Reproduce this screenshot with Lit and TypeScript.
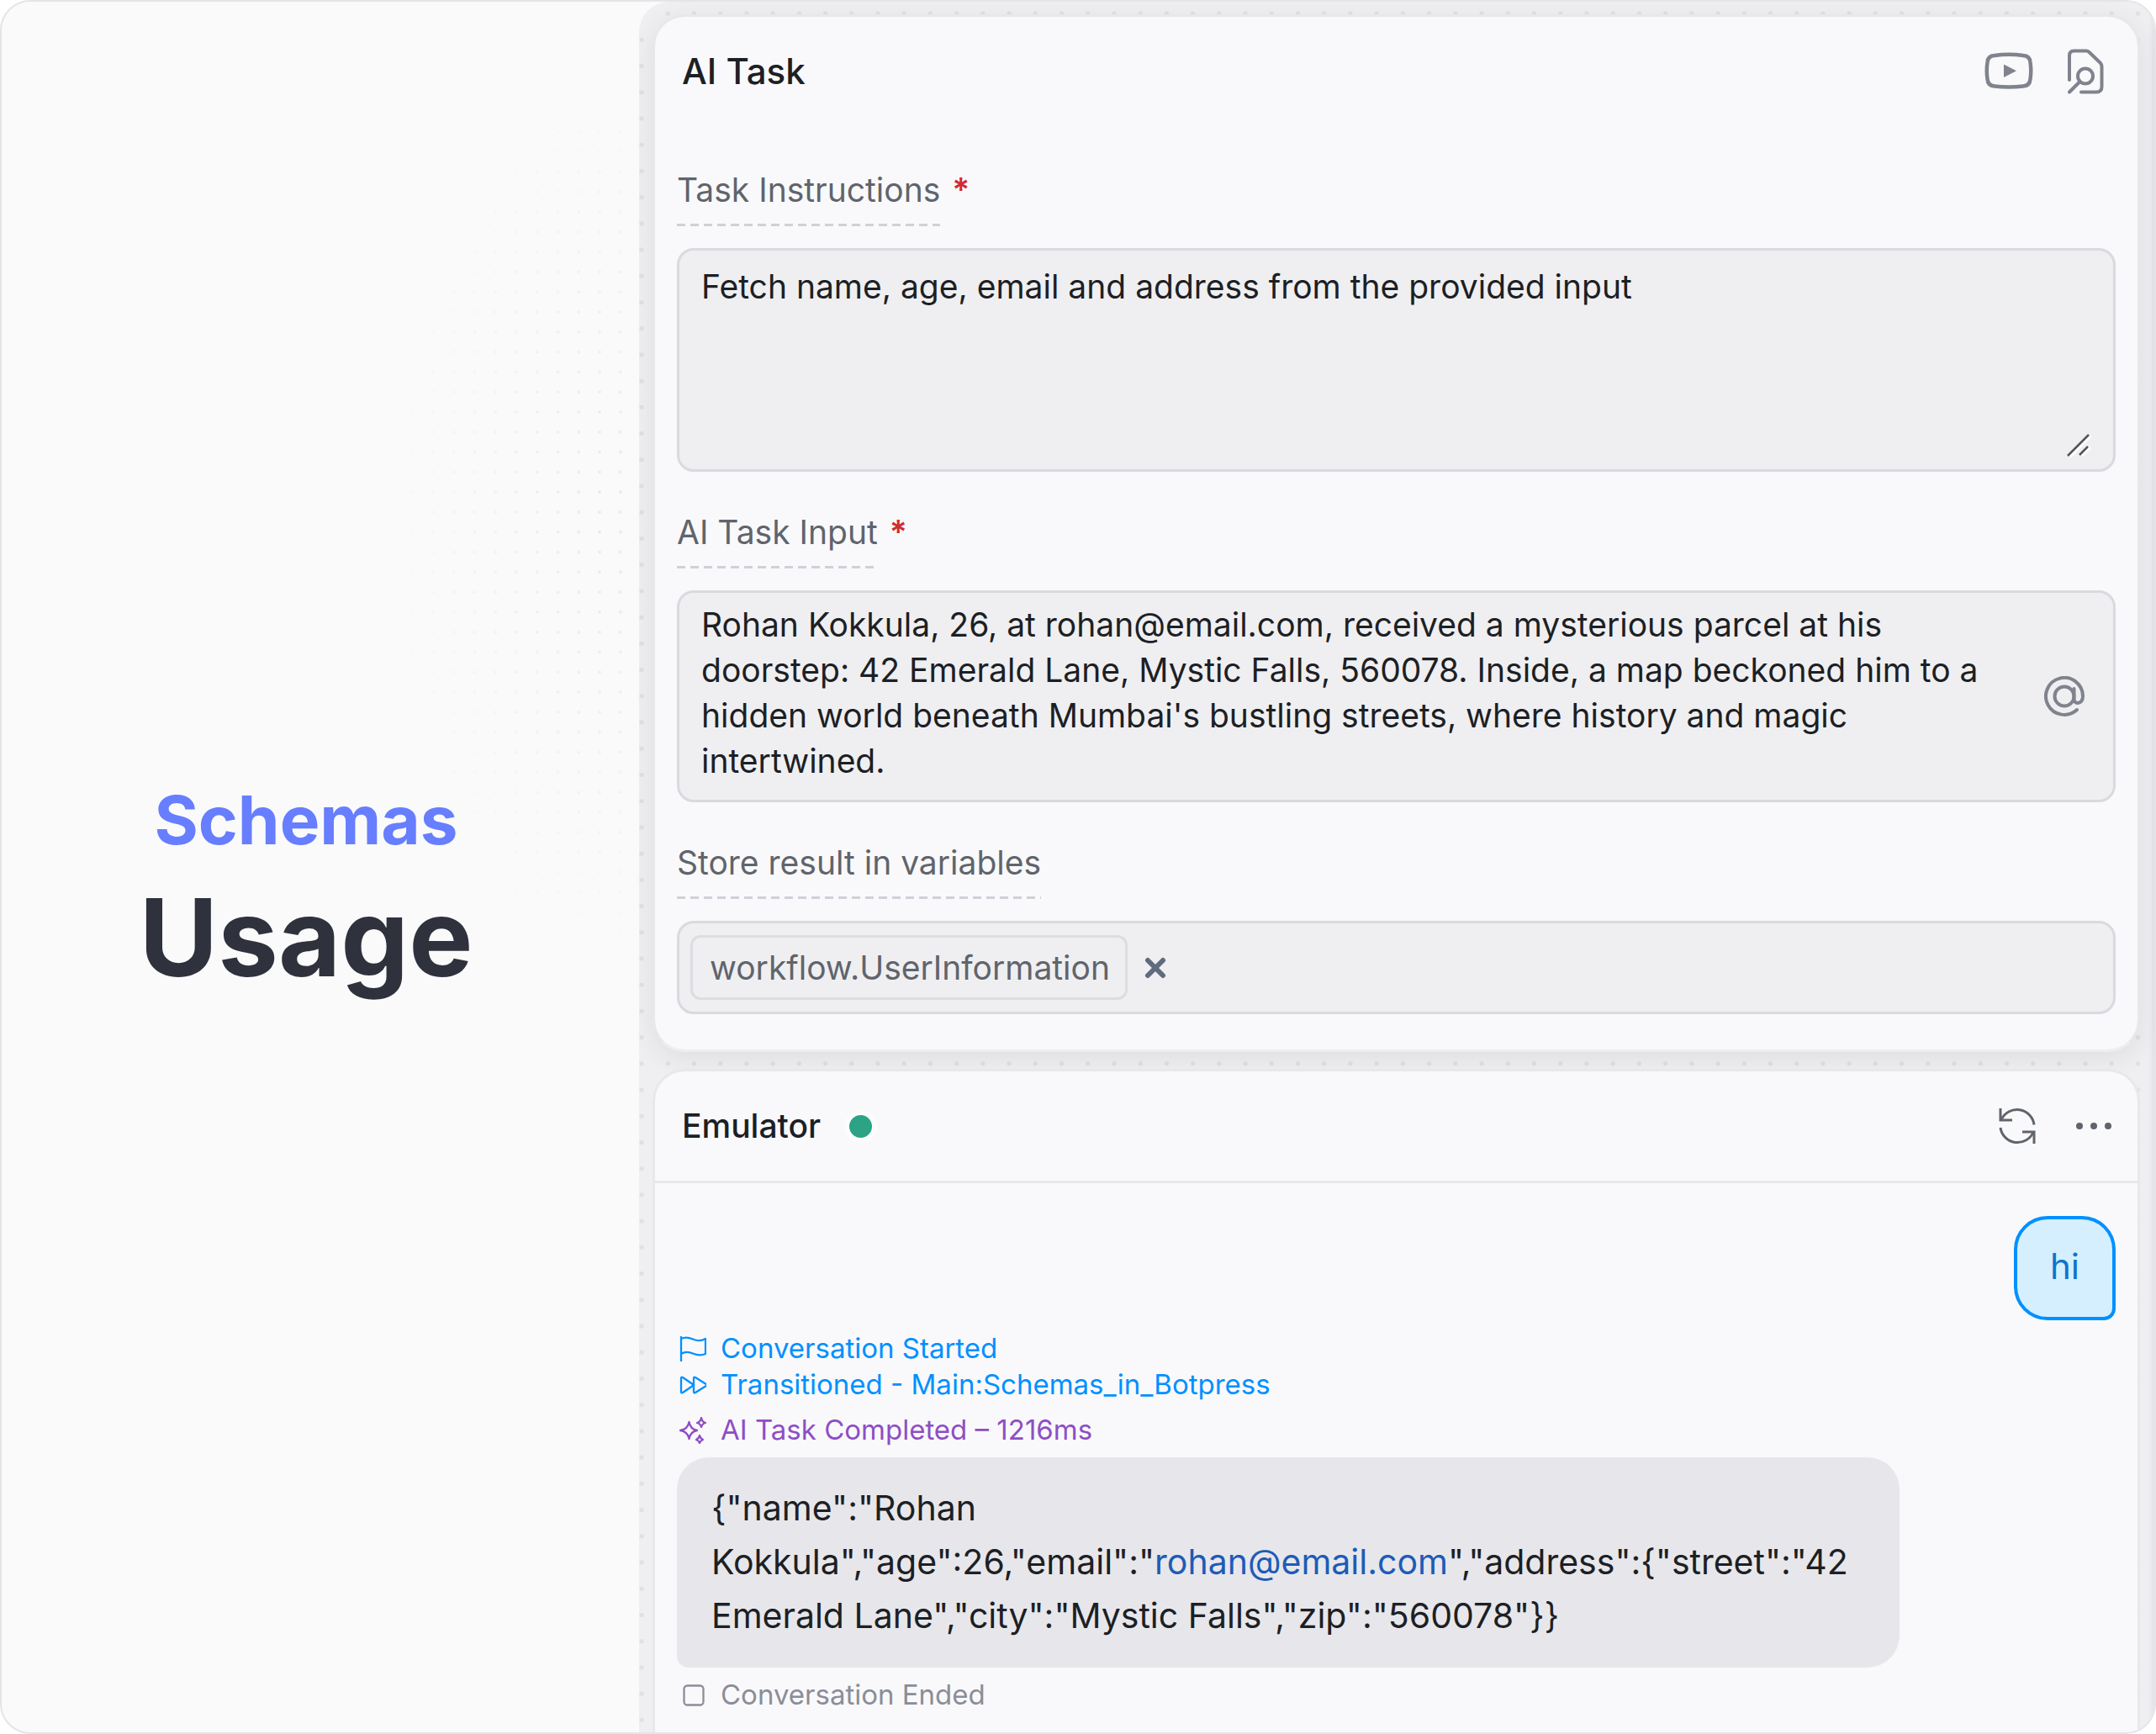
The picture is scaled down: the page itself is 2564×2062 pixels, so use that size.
import { LitElement, html, css, svg } from "lit";
import { customElement } from "lit/decorators.js";

const base = css`
  * { box-sizing: border-box; margin: 0; }
  button {
    display: flex;
    padding: 0;
    border: 0;
    background: none;
    color: inherit;
    cursor: pointer;
  }
  svg { display: block; fill: none; stroke: currentColor; }
`;

const card = css`
  :host { display: block; }
  .card {
    border: 3px solid #e8e8eb;
    border-radius: 38px;
    background: #f9f9fb;
    background-clip: padding-box;
    color: #1c2024;
  }
  .head { display: flex; align-items: center; justify-content: space-between; }
  h2 { font-size: 42px; line-height: 56px; font-weight: 500; }
`;

@customElement("task-card")
class TaskCard extends LitElement {
  static styles = [base, card, css`
    .card { padding: 37px 26px 42px; border-bottom-color: #eeeef0; box-shadow: 0 8px 32px rgba(0, 0, 0, 0.07); }
    .head { padding: 0 14px 0 6px; margin-bottom: 89px; }
    .tools { display: flex; align-items: center; gap: 40px; color: #80838d; }
    .field { display: flex; flex-direction: column; align-items: flex-start; }
    .field + .field { margin-top: 48px; }
    .caption { display: flex; gap: 14px; font-size: 39px; line-height: 48px; margin-bottom: 26px; color: #60646c; }
    .caption label {
      padding-bottom: 19px;
      background: repeating-linear-gradient(90deg, #d0d0d8 0 10px, transparent 10px 16px) bottom / 100% 3px no-repeat;
    }
    .required { color: #ce2c31; font-weight: 600; }
    .box {
      position: relative;
      display: flex;
      align-items: center;
      width: 100%;
      border: 3px solid #d9d9e0;
      border-radius: 20px;
      background: #efeff1;
    }
    textarea {
      flex: 1;
      min-width: 0;
      padding: 11px 20px 19px 26px;
      border: 0;
      outline: 0;
      background: none;
      resize: none;
      overflow: hidden;
      color: #1c2024;
      font: 39px/54px Inter, sans-serif;
    }
    .tall { padding: 16px 20px 28px 26px; }
    .grip { position: absolute; right: 26px; bottom: 14px; color: #555; }
    .mention { margin: 0 34px 0 16px; color: #80838d; }
    .tags { padding: 14px 13px; gap: 20px; }
    .tag {
      padding: 10px 18px 10px 20px;
      border: 3px solid #dcdce2;
      border-radius: 12px;
      font-size: 39px;
      line-height: 51px;
      color: #60646c;
    }
    .remove { color: #5f6b7f; }
  `];

  render() {
    return html`
      <section class="card">
        <header class="head">
          <h2>AI Task</h2>
          <div class="tools">
            <button aria-label="Watch video">
              <svg width="58" height="54" viewBox="0 0 58 54" stroke-width="4.500">
                <path d="M12 8Q29 5.500 46 8Q54 8.500 54.500 16Q56 26 54.500 36Q54 44 46 44.500Q29 46.500 12 44.500Q4 44 3.500 36Q2 26 3.500 16Q4 8.500 12 8Z" />
                <path d="M23 18.500V34L38 26.200Z" fill="currentColor" stroke="none" />
              </svg>
            </button>
            <button aria-label="Documentation">
              <svg width="44" height="54" viewBox="0 0 44 54" stroke-width="4" stroke-linecap="round" stroke-linejoin="round">
                <path d="M3 37V8Q3 2.500 8.500 2.500H23Q25 2.500 26.500 4L39.500 16.500Q41.500 18.500 41.500 21V45Q41.500 51.500 35 51.500H17" />
                <circle cx="22" cy="32.500" r="9" />
                <path d="M15.500 39L3 51.500" />
              </svg>
            </button>
          </div>
        </header>
        <div class="field">
          <div class="caption"><label for="instructions">Task Instructions</label><span class="required">*</span></div>
          <div class="box">
            <textarea class="tall" id="instructions" rows="4" .value=${"Fetch name, age, email and address from the provided input"}></textarea>
            <svg class="grip" width="30" height="30" viewBox="0 0 30 30" stroke-width="2.500">
              <path d="M5 29L29 5M19 28L29 18" stroke="#fff" stroke-width="3" />
              <path d="M2 28L27 3M16 27L26 17" />
            </svg>
          </div>
        </div>
        <div class="field">
          <div class="caption"><label for="input">AI Task Input</label><span class="required">*</span></div>
          <div class="box">
            <textarea id="input" rows="4" .value=${"Rohan Kokkula, 26, at rohan@email.com, received a mysterious parcel at his doorstep: 42 Emerald Lane, Mystic Falls, 560078. Inside, a map beckoned him to a hidden world beneath Mumbai's bustling streets, where history and magic intertwined."}></textarea>
            <button class="mention" aria-label="Insert variable">
              <svg width="48" height="48" viewBox="0 0 48 48" stroke-width="4" stroke-linecap="round">
                <circle cx="24" cy="24" r="11.500" />
                <path d="M35.500 15V27Q35.500 32 40 32Q46 31 46 24A22 22 0 1 0 39 40" />
              </svg>
            </button>
          </div>
        </div>
        <div class="field">
          <div class="caption"><label for="remove">Store result in variables</label></div>
          <div class="box tags">
            <span class="tag">workflow.UserInformation</span>
            <button class="remove" id="remove" aria-label="Remove variable">
              <svg width="26" height="26" viewBox="0 0 26 26" stroke-width="6" stroke-linecap="round"><path d="M4 4L22 22M22 4L4 22" /></svg>
            </button>
          </div>
        </div>
      </section>
    `;
  }
}

const icons = {
  flag: svg`<path d="M2 1V31M2 4Q8 1 16 4.500T31 4V22Q24 25 16 21.500T2 22" />`,
  forward: svg`<path d="M2 8Q2 6 4 7L15 14.500Q17 16 15 17.500L4 25Q2 26 2 24ZM17 8Q17 6 19 7L31 14.500Q33 16 31 17.500L19 25Q17 26 17 24Z" />`,
  sparkles: svg`<path d="M11.500 6Q13 14.500 21 16Q13 17.500 11.500 26Q10 17.500 1 16Q10 14.500 11.500 6ZM26 1Q27 6 31 7Q27 8 26 12Q25 8 21 7Q25 6 26 1ZM24 22Q25 26 28 27Q25 28 24 31Q23 28 20 27Q23 26 24 22Z" />`,
  stop: svg`<rect x="5.500" y="4.500" width="23" height="23" rx="4" />`,
};

const events = [
  { icon: icons.flag, text: "Conversation Started", tone: "event" },
  { icon: icons.forward, text: "Transitioned - Main:Schemas_in_Botpress", tone: "event" },
  { icon: icons.sparkles, text: "AI Task Completed – 1216ms", tone: "event ai" },
];

@customElement("emulator-card")
class EmulatorCard extends LitElement {
  static styles = [base, card, css`
    :host { display: flex; }
    .card { flex: 1; border-bottom: 0; border-radius: 38px 38px 0 0; }
    .head { height: 133px; padding: 0 27px 0 32px; border-bottom: 3px solid #e8e8ec; color: #60646c; }
    h2 { color: #1c2024; font-size: 39px; }
    .title { display: flex; align-items: center; gap: 28px; }
    .status { width: 39px; height: 39px; border: 6px solid #fcfcfc; border-radius: 50%; background: #2ba384; }
    .tools { display: flex; align-items: center; gap: 44px; }
    .chat { display: flex; flex-direction: column; align-items: flex-start; padding: 39px 26px 0; }
    .user {
      align-self: flex-end;
      padding: 24px 39px 28px;
      border: 4px solid #0090ff;
      border-radius: 40px 40px 14px 40px;
      background: #d5efff;
      color: #0d74ce;
      font-size: 42px;
      line-height: 64px;
      margin-bottom: 12px;
    }
    .event { display: flex; align-items: center; gap: 17px; padding-left: 3px; font-size: 33px; line-height: 43px; color: #0090ff; }
    .ai { margin: 11px 0; color: #8e4ec6; }
    .ended { margin-top: 11px; color: #8b8d98; }
    .bot {
      width: 85%;
      padding: 28px 41px 30px;
      border-radius: 38px 38px 38px 14px;
      background: #e7e7eb;
      font-size: 41px;
      line-height: 64px;
      overflow-wrap: break-word;
    }
    a { color: #1e5bb8; text-decoration: none; }
  `];

  render() {
    return html`
      <section class="card">
        <header class="head">
          <div class="title"><h2>Emulator</h2><span class="status"></span></div>
          <div class="tools">
            <button aria-label="Restart conversation">
              <svg width="44" height="44" viewBox="0 0 44 44" stroke-width="3">
                <path d="M2 1V15H16M42 43V29H28" />
                <path d="M3 14.500A20.500 20.500 0 0 1 42 20.500M2 24A20.500 20.500 0 0 0 41 29.500" />
              </svg>
            </button>
            <button aria-label="More options">
              <svg width="50" height="44" viewBox="0 0 50 44">
                <g fill="currentColor" stroke="none"><circle cx="8" cy="22" r="4" /><circle cx="25" cy="22" r="4" /><circle cx="42" cy="22" r="4" /></g>
              </svg>
            </button>
          </div>
        </header>
        <div class="chat">
          <p class="user">hi</p>
          ${events.map((e) => this.event(e.icon, e.text, e.tone))}
          <p class="bot">{"name":"Rohan Kokkula","age":26,"email":"<a href="mailto:rohan@email.com">rohan@email.com</a>","address":{"street":"42 Emerald Lane","city":"Mystic Falls","zip":"560078"}}</p>
          ${this.event(icons.stop, "Conversation Ended", "event ended")}
        </div>
      </section>
    `;
  }

  private event(icon: unknown, text: string, tone: string) {
    return html`<p class=${tone}>
      <svg width="32" height="32" viewBox="0 0 32 32" stroke-width="2.300" stroke-linejoin="round">${icon}</svg>${text}
    </p>`;
  }
}

@customElement("app-root")
class AppRoot extends LitElement {
  static styles = [base, css`
    :host { display: block; font-family: Inter, sans-serif; background: #fff; }
    .frame {
      display: grid;
      grid-template-columns: 758fr 1802fr;
      min-height: 100vh;
      border: 2px solid #e4e4e9;
      border-radius: 36px;
      overflow: hidden;
      background: #fafafa;
    }
    .intro {
      position: relative;
      display: flex;
      flex-direction: column;
      align-items: center;
      justify-content: center;
      padding: 58px 34px 0 0;
      font-weight: 700;
      text-align: center;
    }
    .topic { font-size: 80px; line-height: 96px; color: #667eff; }
    h1 { margin-top: 14px; font-size: 128px; line-height: 156px; font-weight: 700; color: #2f313d; }
    .grid { position: absolute; inset: 0; width: 100%; height: 100%; }
    .grid rect, .grid circle { stroke: none; }
    .fade { mask-image: radial-gradient(320px 620px at 98% 30%, #000 10%, transparent 90%); }
    .panel {
      position: relative;
      display: flex;
      flex-direction: column;
      gap: 20px;
      padding: 15px 17px 0 16px;
      border-top-left-radius: 36px;
      background: #efeff1;
      box-shadow: inset -6px 0 6px -4px rgba(0, 0, 40, 0.08);
      overflow: hidden;
    }
    .panel task-card, .panel emulator-card { position: relative; }
    emulator-card { flex: 1; }
  `];

  render() {
    return html`
      <main class="frame">
        <div class="intro">
          <svg class="grid fade" aria-hidden="true">
            <pattern id="fine" x="8" y="2" width="24.750" height="23.800" patternUnits="userSpaceOnUse">
              <circle cx="10" cy="10" r="1.800" fill="#e8e8ec" />
            </pattern>
            <rect width="98%" height="100%" fill="url(#fine)" />
          </svg>
          <p class="topic">Schemas</p>
          <h1>Usage</h1>
        </div>
        <div class="panel">
          <svg class="grid" aria-hidden="true">
            <pattern id="coarse" x="-13" y="-2" width="31.220" height="31.220" patternUnits="userSpaceOnUse">
              <circle cx="16" cy="16" r="2.600" fill="#dfdfe6" />
            </pattern>
            <rect width="100%" height="100%" fill="url(#coarse)" />
          </svg>
          <task-card></task-card>
          <emulator-card></emulator-card>
        </div>
      </main>
    `;
  }
}
